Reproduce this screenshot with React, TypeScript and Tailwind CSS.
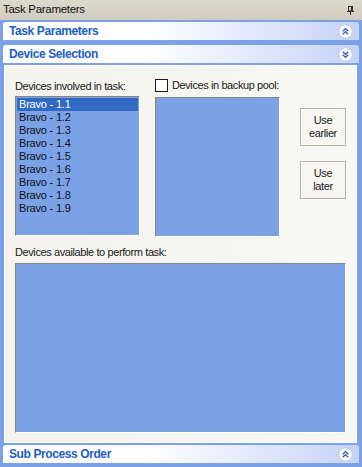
import React from "react";

function Chevron({ up }: { up: boolean }) {
  return (
    <svg width="15" height="15" viewBox="0 0 15 15" className="shrink-0">
      <circle cx="7.5" cy="7.5" r="6.8" fill="#ffffff" stroke="#b9c6e8" strokeWidth="1" />
      {up ? (
        <g fill="none" stroke="#215dc6" strokeWidth="1.4">
          <path d="M4.8 7.2 L7.5 4.6 L10.2 7.2" />
          <path d="M4.8 10.2 L7.5 7.6 L10.2 10.2" />
        </g>
      ) : (
        <g fill="none" stroke="#215dc6" strokeWidth="1.4">
          <path d="M4.8 4.8 L7.5 7.4 L10.2 4.8" />
          <path d="M4.8 7.8 L7.5 10.4 L10.2 7.8" />
        </g>
      )}
    </svg>
  );
}

function Header({ title, up }: { title: string; up: boolean }) {
  return (
    <div className="h-[18px] mx-[3px] rounded-t-[3px] bg-gradient-to-r from-[#ffffff] from-40% to-[#c6d3f7] flex items-center justify-between pl-[6px] pr-[6px]">
      <span className="text-[12px] font-bold text-[#215dc6] leading-none tracking-[-0.4px]">{title}</span>
      <Chevron up={up} />
    </div>
  );
}

function ListBox({ className, children }: { className: string; children?: React.ReactNode }) {
  return (
    <div className={"bg-[#7ba2e7] border border-t-[#8a887c] border-l-[#8a887c] border-b-[#ffffff] border-r-[#ffffff] " + className}>
      {children}
    </div>
  );
}

function Btn({ lines }: { lines: string[] }) {
  return (
    <div className="w-[46px] h-[38px] border border-[#b5b2a4] bg-[#f7f6f1] flex flex-col items-center justify-center text-[11px] leading-[13px] text-[#1a1a1a] shadow-[inset_1px_1px_0_#ffffff]">
      {lines.map((l) => (
        <span key={l}>{l}</span>
      ))}
    </div>
  );
}

export default function App() {
  const items = ["1.1", "1.2", "1.3", "1.4", "1.5", "1.6", "1.7", "1.8", "1.9"];
  return (
    <div className="w-[362px] h-[467px] bg-[#7ba2e7] flex flex-col font-['Liberation_Sans',_'DejaVu_Sans',_sans-serif] overflow-hidden">
      <div className="h-[20px] bg-gradient-to-b from-[#dcd9cd] to-[#d0ccbf] flex items-center justify-between pl-[3px] pr-[8px]">
        <span className="text-[11.5px] text-[#111111] tracking-[-0.3px]">Task Parameters</span>
        <svg width="7" height="9" viewBox="0 0 7 9">
          <rect x="1.5" y="0.5" width="4" height="4.5" fill="#d0ccbf" stroke="#333" strokeWidth="1" />
          <rect x="4" y="1" width="1" height="4" fill="#333" />
          <path d="M0 5.5 H7" stroke="#333" strokeWidth="1" />
          <path d="M3.5 5.5 V9" stroke="#333" strokeWidth="1" />
        </svg>
      </div>
      <div className="h-[2px]" />
      <Header title="Task Parameters" up={true} />
      <div className="h-[5px]" />
      <Header title="Device Selection" up={false} />
      <div className="h-[2px]" />
      <div className="h-[378px] ml-[4px] mr-[5px] bg-gradient-to-r from-[#f4f3ee] to-[#f8f8f4] border border-[#fdfdfb] flex flex-col pl-[10px] text-[11px] tracking-[-0.4px] text-[#1a1a1a]">
        <div className="flex mt-[12px]">
          <div className="w-[125px] flex flex-col">
            <div className="h-[13px] leading-[13px] mt-[2px] whitespace-nowrap">Devices involved in task:</div>
            <ListBox className="mt-[3px] w-[125px] h-[140px] pt-[1px] px-[1px]">
              {items.map((n, i) => (
                <div
                  key={n}
                  className={
                    "h-[13px] leading-[13px] pl-[2px] text-[11px] tracking-[-0.2px] " +
                    (i === 0 ? "bg-[#316ac5] text-white" : "text-[#111111]")
                  }
                >
                  Bravo - {n}
                </div>
              ))}
            </ListBox>
          </div>
          <div className="w-[125px] ml-[15px] flex flex-col">
            <div className="flex items-center h-[13px] mt-[1px] whitespace-nowrap">
              <div className="w-[13px] h-[13px] border border-[#1c1c1c] bg-white shrink-0" />
              <span className="ml-[4px] leading-[13px]">Devices in backup pool:</span>
            </div>
            <ListBox className="mt-[5px] w-[125px] h-[140px]" />
          </div>
          <div className="ml-[20px] flex flex-col mt-[30px] gap-[15px]">
            <Btn lines={["Use", "earlier"]} />
            <Btn lines={["Use", "later"]} />
          </div>
        </div>
        <div className="h-[13px] leading-[13px] mt-[9px] whitespace-nowrap">Devices available to perform task:</div>
        <ListBox className="mt-[4px] w-[331px] h-[170px]" />
      </div>
      <div className="h-[2px]" />
      <Header title="Sub Process Order" up={true} />
    </div>
  );
}
